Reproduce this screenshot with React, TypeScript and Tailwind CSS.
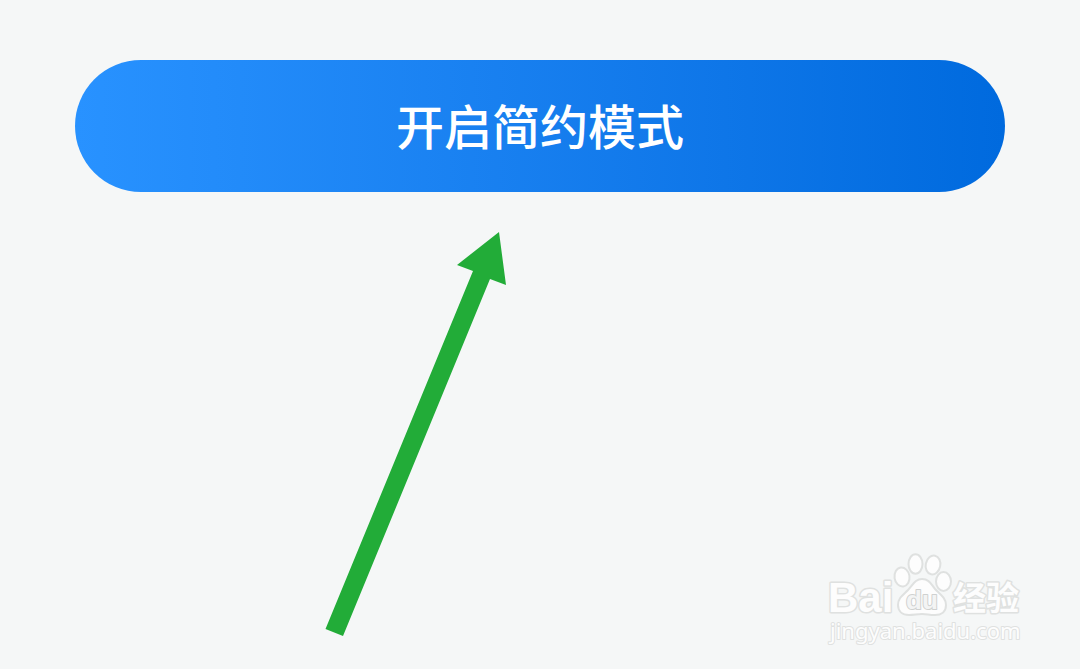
function PointerArrow() {
  return (
    <svg width="181" height="404" viewBox="0 0 181 404" className="shrink-0" aria-hidden="true">
      <path d="M174 0 L181 53 L165 47 L18 404 L0.5 397 L148 39 L132 33 Z" fill="#22ac38" />
    </svg>
  )
}

function Watermark() {
  return (
    <svg
      width="198"
      height="94"
      viewBox="0 0 198 94"
      className="shrink-0"
      role="img"
      aria-label="Baidu 经验"
      fill="#fdfdfd"
      stroke="#dfe1e0"
      strokeWidth="3"
      strokeLinejoin="round"
    >
      <g style={{ paintOrder: 'stroke' }}>
        <text x="2" y="60" className="font-['Liberation_Sans',sans-serif] text-[42px] font-bold">
          Bai
        </text>
        <text x="127" y="58" className="font-['Noto_Sans_CJK_SC',sans-serif] text-[33px] font-bold">
          经验
        </text>
        <text x="4" y="87" strokeWidth="2" className="font-['Noto_Sans',sans-serif] text-[22px]">
          jingyan.baidu.com
        </text>
      </g>

      {/* paw */}
      <g strokeWidth="2">
        <ellipse cx="76" cy="25" rx="7.5" ry="9.5" transform="rotate(-8 76 25)" />
        <ellipse cx="89.5" cy="12" rx="7" ry="9.8" />
        <ellipse cx="107" cy="13" rx="7.3" ry="9.5" transform="rotate(12 107 13)" />
        <ellipse cx="117.5" cy="29.5" rx="7.5" ry="9.5" />
        <path d="M96 27 C103 27 105 32 109 37 C114 42 120 46 120 53 C120 60 115 63 109 63 C103 63 101 62 96 62 C91 62 88 63 83 63 C76 63 72 59 72 53 C72 46 77 43 82 38 C87 33 89 27 96 27 Z" />
      </g>
      <text
        x="80"
        y="57"
        strokeWidth="2"
        style={{ paintOrder: 'stroke' }}
        className="font-['Liberation_Sans',sans-serif] text-[26px] font-bold"
        fill="#f3f4f4"
        stroke="#cfd1d0"
      >
        du
      </text>
    </svg>
  )
}

export default function App() {
  return (
    <main className="min-h-screen bg-[#f5f7f7] pt-[60px]">
      <div className="px-[75px]">
        <button
          type="button"
          className="h-[132px] w-full rounded-full bg-linear-to-r from-[#2892ff] to-[#006ade] pb-1 font-['Noto_Sans_CJK_SC',sans-serif] text-5xl font-medium text-white"
        >
          开启简约模式
        </button>
      </div>

      <div className="flex items-end justify-between pt-10 pr-14 pl-[325px]">
        <PointerArrow />
        <div className="-mb-2.5">
          <Watermark />
        </div>
      </div>
    </main>
  )
}
